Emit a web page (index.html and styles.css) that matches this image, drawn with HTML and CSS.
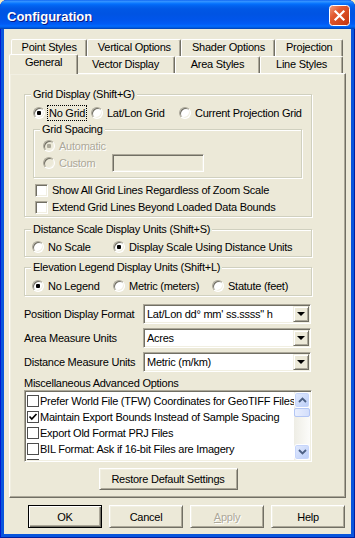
FILE: index.html
```html
<!DOCTYPE html>
<html lang="en">
<head>
    <meta charset="UTF-8">
    <meta name="viewport" content="width=device-width, initial-scale=1.0">
    <title>Configuration</title>
    <link rel="stylesheet" href="styles.css">
</head>
<body>
    <div class="window">
        <div class="titlebar">
            <span class="title">Configuration</span>
            <span class="close-btn">
                <svg width="21" height="21" viewBox="0 0 21 21">
                    <defs>
                        <linearGradient id="closeGrad" x1="0" y1="0" x2="1" y2="1">
                            <stop offset="0" stop-color="#F0A083"/>
                            <stop offset="0.35" stop-color="#E2592F"/>
                            <stop offset="1" stop-color="#C3340C"/>
                        </linearGradient>
                    </defs>
                    <rect x="0.5" y="0.5" width="20" height="20" rx="3" fill="url(#closeGrad)" stroke="#fff"/>
                    <path d="M6.5 6.5 L14.5 14.5 M14.5 6.5 L6.5 14.5" stroke="#fff" stroke-width="2.2" stroke-linecap="square"/>
                </svg>
            </span>
        </div>

        <div class="client">
            <div class="tab-row">
                <div class="tab">Point Styles</div>
                <div class="tab">Vertical Options</div>
                <div class="tab">Shader Options</div>
                <div class="tab">Projection</div>
            </div>
            <div class="tab-row">
                <div class="tab active">General</div>
                <div class="tab">Vector Display</div>
                <div class="tab">Area Styles</div>
                <div class="tab">Line Styles</div>
            </div>

            <div class="panel">
                <div class="content">
                    <!-- grid -->
                    <fieldset class="group">
                        <legend>Grid Display (Shift+G)</legend>
                        <div class="radios cols-grid">
                            <div class="opt"><span class="radio on"></span><span class="focus">No Grid</span></div>
                            <div class="opt"><span class="radio"></span>Lat/Lon Grid</div>
                            <div class="opt"><span class="radio"></span>Current Projection Grid</div>
                        </div>
                        <fieldset class="group spacing">
                            <legend>Grid Spacing</legend>
                            <div class="radios cols-spacing first">
                                <div class="opt disabled"><span class="radio on"></span>Automatic</div>
                            </div>
                            <div class="radios cols-spacing tall">
                                <div class="opt disabled"><span class="radio"></span>Custom</div>
                                <span class="edit"></span>
                            </div>
                        </fieldset>
                        <div class="opt chk first"><span class="check"></span>Show All Grid Lines Regardless of Zoom Scale</div>
                        <div class="opt chk"><span class="check"></span>Extend Grid Lines Beyond Loaded Data Bounds</div>
                    </fieldset>

                    <!-- distance scale -->
                    <fieldset class="group units">
                        <legend>Distance Scale Display Units (Shift+S)</legend>
                        <div class="radios cols-units">
                            <div class="opt"><span class="radio"></span>No Scale</div>
                            <div class="opt"><span class="radio on"></span>Display Scale Using Distance Units</div>
                        </div>
                    </fieldset>

                    <!-- elevation legend -->
                    <fieldset class="group units elev">
                        <legend>Elevation Legend Display Units (Shift+L)</legend>
                        <div class="radios cols-units">
                            <div class="opt"><span class="radio on"></span>No Legend</div>
                            <div class="opt"><span class="radio"></span>Metric (meters)</div>
                            <div class="opt"><span class="radio"></span>Statute (feet)</div>
                        </div>
                    </fieldset>

                    <div class="combo-row first">
                        <span class="combo-label">Position Display Format</span>
                        <div class="combo"><span class="combo-text">Lat/Lon dd° mm' ss.ssss" h</span><span class="drop"></span></div>
                    </div>
                    <div class="combo-row">
                        <span class="combo-label">Area Measure Units</span>
                        <div class="combo"><span class="combo-text">Acres</span><span class="drop"></span></div>
                    </div>
                    <div class="combo-row">
                        <span class="combo-label">Distance Measure Units</span>
                        <div class="combo"><span class="combo-text">Metric (m/km)</span><span class="drop"></span></div>
                    </div>

                    <div class="misc-label">Miscellaneous Advanced Options</div>
                    <div class="listbox">
                        <div class="list">
                            <div class="item"><span class="flat-check"></span>Prefer World File (TFW) Coordinates for GeoTIFF Files</div>
                            <div class="item"><span class="flat-check"><svg width="10" height="10" viewBox="0 0 10 10"><path d="M1.5 4.5 L3.8 7 L8.5 2" stroke="#000" stroke-width="1.7" fill="none"/></svg></span>Maintain Export Bounds Instead of Sample Spacing</div>
                            <div class="item"><span class="flat-check"></span>Export Old Format PRJ Files</div>
                            <div class="item"><span class="flat-check"></span>BIL Format: Ask if 16-bit Files are Imagery</div>
                            <div class="item"><span class="flat-check"></span>DGN: Add DGN Color Number to Feature Description</div>
                        </div>
                        <div class="scrollbar">
                            <span class="sb-btn"><svg width="9" height="6" viewBox="0 0 9 6"><path d="M1 5 L4.5 1.5 L8 5" stroke="#4D6185" stroke-width="1.8" fill="none"/></svg></span>
                            <span class="sb-thumb"></span>
                            <span class="sb-track"></span>
                            <span class="sb-btn"><svg width="9" height="6" viewBox="0 0 9 6"><path d="M1 1 L4.5 4.5 L8 1" stroke="#4D6185" stroke-width="1.8" fill="none"/></svg></span>
                        </div>
                    </div>

                    <div class="btn restore">Restore Default Settings</div>
                </div>
            </div>

            <div class="actions">
                <div class="btn default">OK</div>
                <div class="btn">Cancel</div>
                <div class="btn disabled"><u>A</u>pply</div>
                <div class="btn">Help</div>
            </div>
        </div>
    </div>
</body>
</html>
```

FILE: styles.css
```css
:root {
    --face: #ECE9D8;
    --light: #F1EFE2;
    --shadow: #ACA899;
    --dark: #716F64;
    --etch: #D0D0BF;
}

* {
    box-sizing: border-box;
}

body {
    margin: 0;
    width: 355px;
    height: 538px;
    background: #F3EBC0;
    font-family: 'Liberation Sans', Arial, sans-serif;
    font-size: 11px;
    letter-spacing: -0.25px;
    color: #000;
}

/* window frame */
.window {
    width: 355px;
    height: 538px;
    display: flex;
    flex-direction: column;
    background: #0855DD;
    border-radius: 7px 7px 0 0;
    overflow: hidden;
    box-shadow: inset 1px 0 0 #0019CF, inset -1px 0 0 #001EA0, inset 0 -1px 0 #001EA0;
}

.titlebar {
    height: 29px;
    flex: none;
    display: flex;
    justify-content: space-between;
    align-items: center;
    padding: 0 5px 0 7px;
    background: linear-gradient(to bottom,
        #0058EE 0, #3A93FF 1px, #288EFF 2px, #127DFF 3px, #036FFC 4px,
        #0262EE 6px, #0057E5 9px, #0054E3 14px, #0055EB 20px,
        #005BF5 24px, #026AFE 26px, #0062EF 27px, #0052D6 28px, #0040AB 29px);
}

.title {
    color: #fff;
    font-weight: bold;
    font-size: 13px;
    letter-spacing: 0;
    margin-top: 4px;
    text-shadow: 1px 1px 0 #0A1883;
}

.close-btn {
    display: block;
    width: 21px;
    height: 21px;
    margin-top: 2px;
}

.close-btn svg {
    display: block;
}

.client {
    flex: 1;
    margin: 0 4px 4px;
    background: var(--face);
    padding: 10px 5px 6px;
    display: flex;
    flex-direction: column;
}

/* tabs */
.tab-row {
    display: flex;
    height: 17px;
    padding: 0 3px 0 2px;
}

.tab {
    flex: 1 1 auto;
    height: 17px;
    text-align: center;
    line-height: 15px;
    white-space: nowrap;
    background: var(--face);
    border: 1px solid;
    border-bottom: 0;
    border-color: #fff var(--dark) transparent #fff;
    border-radius: 2px 2px 0 0;
    box-shadow: inset -1px 0 0 var(--shadow);
}

.tab.active {
    position: relative;
    z-index: 1;
    height: 20px;
    margin: -2px -2px 0;
    line-height: 15px;
}

.panel {
    height: 425px;
    flex: none;
    border: 1px solid;
    border-color: #fff var(--dark) var(--dark) #fff;
    box-shadow: inset -1px -1px 0 var(--shadow), inset 1px 1px 0 var(--light);
    padding: 14px 0 0 14px;
}

.content {
    width: 288px;
}

/* group boxes */
.group {
    width: 288px;
    min-inline-size: 0;
    margin: 0;
    padding: 0 0 1px;
    border: 1px solid var(--etch);
    box-shadow: 1px 1px 0 #fff, inset 1px 1px 0 #fff;
}

.group legend {
    margin-left: 6px;
    padding: 0 2px;
    line-height: 13px;
    background: var(--face);
}

.group.spacing {
    width: 269px;
    margin: 2px 0 0 8px;
    padding-bottom: 5px;
}

.group.units {
    margin-top: 6px;
}

.group.elev {
    margin-top: 4px;
}

.radios {
    display: grid;
    align-items: center;
    height: 16px;
    margin-top: 4px;
    padding-left: 8px;
}

.cols-grid {
    grid-template-columns: 58px 88px auto;
}

.cols-units {
    grid-template-columns: 81px 99px auto;
    padding-left: 7px;
}

.units .radios {
    margin-top: 3px;
}

.elev .radios {
    margin-top: 4px;
}

.cols-spacing {
    grid-template-columns: 69px auto;
    padding-left: 9px;
    margin-top: 0;
}

.cols-spacing.first {
    margin-top: 2px;
}

.cols-spacing.tall {
    height: 18px;
}

.opt {
    display: flex;
    align-items: center;
    gap: 4px;
    height: 16px;
    white-space: nowrap;
}

.opt.disabled {
    color: var(--shadow);
    text-shadow: 1px 1px 0 #fff;
}

.focus {
    outline: 1px dotted #000;
    outline-offset: 0;
    padding: 0 1px;
    line-height: 14px;
    margin-left: -1px;
}

.radio {
    flex: none;
    width: 12px;
    height: 12px;
    border-radius: 50%;
    background: #fff;
    border: 1px solid;
    border-color: var(--shadow) #fff #fff var(--shadow);
    box-shadow: inset 1px 1px 0 var(--dark), inset -1px -1px 0 var(--light);
    display: flex;
    align-items: center;
    justify-content: center;
}

.radio.on::after {
    content: "";
    width: 4px;
    height: 4px;
    border-radius: 1px;
    background: #000;
}

.disabled .radio {
    background: var(--face);
}

.disabled .radio.on::after {
    background: var(--shadow);
}

.edit {
    width: 92px;
    height: 18px;
    background: var(--face);
    border: 1px solid;
    border-color: var(--shadow) #fff #fff var(--shadow);
    box-shadow: inset 1px 1px 0 var(--dark), inset -1px -1px 0 var(--light);
}

.chk {
    padding-left: 10px;
    margin-top: 1px;
}

.chk.first {
    margin-top: 4px;
}

.check {
    flex: none;
    width: 13px;
    height: 13px;
    background: #fff;
    border: 1px solid;
    border-color: var(--shadow) #fff #fff var(--shadow);
    box-shadow: inset 1px 1px 0 var(--dark), inset -1px -1px 0 var(--light);
}

/* combo boxes */
.combo-row {
    display: flex;
    align-items: center;
    height: 20px;
    margin-top: 4px;
}

.combo-row.first {
    margin-top: 8px;
}

.combo-label {
    width: 119px;
    white-space: nowrap;
}

.combo {
    width: 168px;
    height: 20px;
    display: flex;
    align-items: center;
    background: #fff;
    padding: 1px;
    border: 1px solid;
    border-color: var(--shadow) #fff #fff var(--shadow);
    box-shadow: inset 1px 1px 0 var(--dark), inset -1px -1px 0 var(--light);
}

.combo-text {
    flex: 1;
    padding-left: 2px;
    white-space: nowrap;
}

.drop {
    width: 16px;
    height: 16px;
    flex: none;
    background: var(--face);
    border: 1px solid;
    border-color: var(--light) var(--dark) var(--dark) var(--light);
    box-shadow: inset 1px 1px 0 #fff, inset -1px -1px 0 var(--shadow);
    display: flex;
    align-items: center;
    justify-content: center;
}

.drop::after {
    content: "";
    width: 0;
    height: 0;
    border-left: 4px solid transparent;
    border-right: 4px solid transparent;
    border-top: 4px solid #000;
}

/* misc list */
.misc-label {
    margin-top: 5px;
    line-height: 13px;
}

.listbox {
    width: 288px;
    height: 72px;
    display: flex;
    background: #fff;
    padding: 1px;
    border: 1px solid;
    border-color: var(--shadow) #fff #fff var(--shadow);
    box-shadow: inset 1px 1px 0 var(--dark), inset -1px -1px 0 var(--light);
}

.list {
    flex: 1;
    overflow: hidden;
    padding: 1px 0 0 1px;
}

.item {
    height: 16px;
    display: flex;
    align-items: center;
    gap: 1px;
    white-space: nowrap;
}

.flat-check {
    flex: none;
    width: 12px;
    height: 12px;
    border: 1px solid #4D4D4D;
    background: #fff;
    display: flex;
    align-items: center;
    justify-content: center;
}

.flat-check svg {
    display: block;
}

.scrollbar {
    width: 16px;
    flex: none;
    display: flex;
    flex-direction: column;
    background: linear-gradient(to right, #EEEDE5, #FCFCFA);
}

.sb-btn {
    height: 16px;
    flex: none;
    display: flex;
    align-items: center;
    justify-content: center;
    border: 1px solid #fff;
    border-radius: 3px;
    background: linear-gradient(135deg, #E3EBFE, #BACDF8);
    box-shadow: inset 0 0 0 1px #C6D5FB;
}

.sb-thumb {
    height: 9px;
    flex: none;
    border: 1px solid #B3C6F5;
    border-radius: 2px;
    background: linear-gradient(to right, #E9EFFE, #D3DEFB);
}

.sb-track {
    flex: 1;
}

/* buttons */
.btn {
    height: 23px;
    display: flex;
    align-items: center;
    justify-content: center;
    background: var(--face);
    border: 1px solid;
    border-color: #fff var(--dark) var(--dark) #fff;
    box-shadow: inset 1px 1px 0 var(--light), inset -1px -1px 0 var(--shadow);
    white-space: nowrap;
}

.btn.restore {
    width: 139px;
    height: 22px;
    margin: 6px auto 0;
}

.btn.default {
    border-color: #000;
    box-shadow: inset 1px 1px 0 #fff, inset -1px -1px 0 var(--dark), inset -2px -2px 0 var(--shadow);
}

.btn.disabled {
    color: var(--shadow);
    text-shadow: 1px 1px 0 #fff;
}

.actions {
    display: flex;
    justify-content: flex-end;
    gap: 7px;
    margin-top: 7px;
    padding-right: 1px;
}

.actions .btn {
    width: 74px;
}
```
